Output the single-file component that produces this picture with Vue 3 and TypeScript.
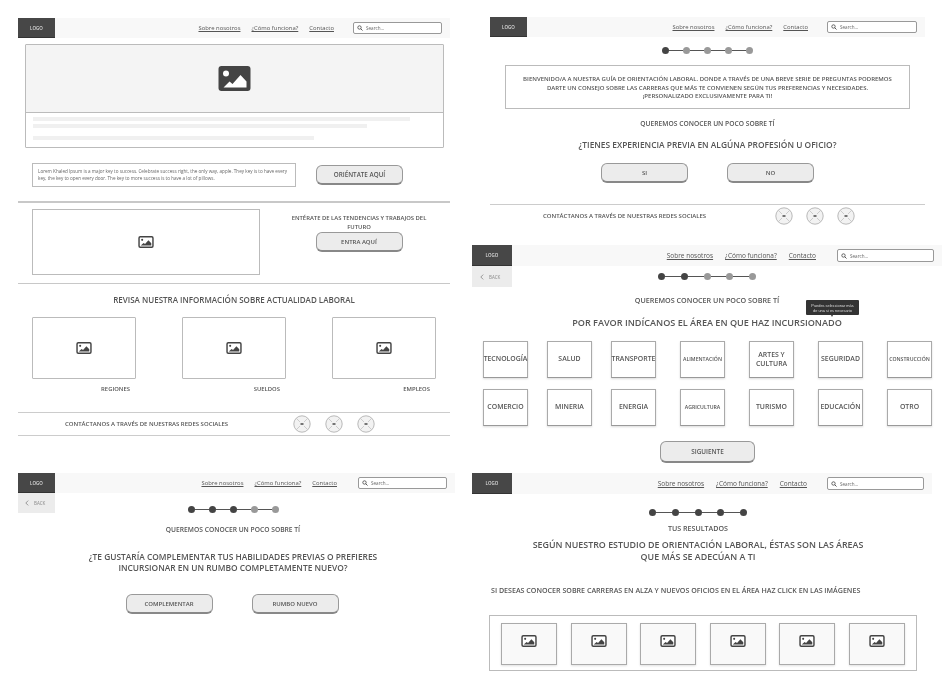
<script setup lang="ts">
type PanelId = 'home' | 'intro' | 'areas' | 'rumbo' | 'results'

const panels: { id: PanelId; back: boolean; steps: number }[] = [
  { id: 'home', back: false, steps: 0 },
  { id: 'intro', back: false, steps: 1 },
  { id: 'areas', back: true, steps: 2 },
  { id: 'rumbo', back: true, steps: 3 },
  { id: 'results', back: false, steps: 5 },
]

const stepIndexes = [1, 2, 3, 4, 5]
const socials = [1, 2, 3]
const infoCards = ['REGIONES', 'SUELDOS', 'EMPLEOS']
const resultCards = [1, 2, 3, 4, 5, 6]

const areaRows = [
  [
    { name: 'TECNOLOGÍA' },
    { name: 'SALUD' },
    { name: 'TRANSPORTE' },
    { name: 'ALIMENTACIÓN', small: true },
    { name: 'ARTES Y CULTURA' },
    { name: 'SEGURIDAD' },
    { name: 'CONSTRUCCIÓN', small: true },
  ],
  [
    { name: 'COMERCIO' },
    { name: 'MINERIA' },
    { name: 'ENERGIA' },
    { name: 'AGRICULTURA', small: true },
    { name: 'TURISMO' },
    { name: 'EDUCACIÓN' },
    { name: 'OTRO' },
  ],
]
</script>

<template>
  <main class="board">
    <svg class="defs" width="0" height="0" aria-hidden="true">
      <symbol id="pic-solid" viewBox="0 0 32 25">
        <rect width="32" height="25" rx="3" fill="#444" />
        <circle cx="7.5" cy="7.5" r="3" fill="#fff" />
        <path d="M5 21.5l6-6 3 2.5 8-9 6 6.5v6z" fill="#fff" />
      </symbol>
      <symbol id="pic-line" viewBox="0 0 32 25">
        <rect x="1.5" y="1.5" width="29" height="22" rx="2.5" fill="#fff" stroke="#444" stroke-width="3" />
        <circle cx="8" cy="8" r="2.2" fill="#444" />
        <path d="M5 20l6-5.5 3 2 7-7.5 6 6v5z" fill="#444" />
      </symbol>
    </svg>

    <section v-for="panel in panels" :key="panel.id" class="panel" :class="panel.id">
      <header class="nav">
        <div class="logo">LOGO</div>
        <nav class="links">
          <a>Sobre nosotros</a>
          <a>¿Cómo funciona?</a>
          <a>Contacto</a>
        </nav>
        <div class="search">
          <svg class="search-icon" viewBox="0 0 12 12">
            <circle cx="5" cy="5" r="3.4" fill="none" stroke="#444" stroke-width="1.6" />
            <path d="M7.6 7.6L11 11" stroke="#444" stroke-width="1.8" />
          </svg>
          <span>Search...</span>
        </div>
      </header>

      <div v-if="panel.back" class="back">
        <svg viewBox="0 0 6 10" class="back-arrow">
          <path d="M5 1L1 5l4 4" fill="none" stroke="#777" stroke-width="1.2" />
        </svg>
        <span>BACK</span>
      </div>

      <div v-if="panel.steps" class="stepper">
        <template v-for="n in stepIndexes" :key="n">
          <span v-if="n > 1" class="step-line"></span>
          <span class="step-dot" :class="{ done: n <= panel.steps }"></span>
        </template>
      </div>

      <template v-if="panel.id === 'home'">
        <div class="hero">
          <div class="hero-img">
            <svg class="icon-hero"><use href="#pic-solid" /></svg>
          </div>
          <div class="hero-lines">
            <i class="l1"></i>
            <i class="l2"></i>
            <i class="l3"></i>
          </div>
        </div>
        <div class="lorem-row">
          <p class="lorem">
            Lorem Khaled Ipsum is a major key to success. Celebrate success right, the only way, apple. They key is to have every<br />
            key, the key to open every door. The key to more success is to have a lot of pillows.
          </p>
          <button class="btn strong">ORIÉNTATE AQUÍ</button>
        </div>
        <hr class="rule thick" />
        <div class="trend-row">
          <div class="trend-img">
            <svg class="icon-small"><use href="#pic-line" /></svg>
          </div>
          <div class="trend-side">
            <h3>ENTÉRATE DE LAS TENDENCIAS Y TRABAJOS DEL<br />FUTURO</h3>
            <button class="btn entra">ENTRA AQUÍ</button>
          </div>
        </div>
        <hr class="rule" />
        <h2 class="info-title">REVISA NUESTRA INFORMACIÓN SOBRE ACTUALIDAD LABORAL</h2>
        <div class="info-grid">
          <div v-for="card in infoCards" :key="card" class="info-card">
            <div class="info-img">
              <svg class="icon-small"><use href="#pic-line" /></svg>
            </div>
            <span class="info-label">{{ card }}</span>
          </div>
        </div>
      </template>

      <template v-if="panel.id === 'intro'">
        <div class="welcome">
          BIENVENIDO/A A NUESTRA GUÍA DE ORIENTACIÓN LABORAL. DONDE A TRAVÉS DE UNA BREVE SERIE DE PREGUNTAS PODREMOS<br />
          DARTE UN CONSEJO SOBRE LAS CARRERAS QUE MÁS TE CONVIENEN SEGÚN TUS PREFERENCIAS Y NECESIDADES.<br />
          ¡PERSONALIZADO EXCLUSIVAMENTE PARA TI!
        </div>
        <p class="kicker">QUEREMOS CONOCER UN POCO SOBRE TÍ</p>
        <h2 class="question">¿TIENES EXPERIENCIA PREVIA EN ALGÚNA PROFESIÓN U OFICIO?</h2>
        <div class="choices">
          <button class="btn">SI</button>
          <button class="btn">NO</button>
        </div>
      </template>

      <template v-if="panel.id === 'areas'">
        <p class="kicker">QUEREMOS CONOCER UN POCO SOBRE TÍ</p>
        <h2 class="question">
          POR FAVOR INDÍCANOS EL ÁREA EN QUE HAZ INCURSIONADO
          <span class="tooltip">Puedes seleccionar más<br />de una si es necesario</span>
        </h2>
        <div v-for="(row, r) in areaRows" :key="r" class="tile-row">
          <div v-for="area in row" :key="area.name" class="tile" :class="{ small: area.small }">
            {{ area.name }}
          </div>
        </div>
        <button class="btn next">SIGUIENTE</button>
      </template>

      <template v-if="panel.id === 'rumbo'">
        <p class="kicker">QUEREMOS CONOCER UN POCO SOBRE TÍ</p>
        <h2 class="question">
          ¿TE GUSTARÍA COMPLEMENTAR TUS HABILIDADES PREVIAS O PREFIERES<br />
          INCURSIONAR EN UN RUMBO COMPLETAMENTE NUEVO?
        </h2>
        <div class="choices">
          <button class="btn">COMPLEMENTAR</button>
          <button class="btn">RUMBO NUEVO</button>
        </div>
      </template>

      <template v-if="panel.id === 'results'">
        <p class="kicker">TUS RESULTADOS</p>
        <h2 class="question">
          SEGÚN NUESTRO ESTUDIO DE ORIENTACIÓN LABORAL, ÉSTAS SON LAS ÁREAS<br />
          QUE MÁS SE ADECÚAN A TI
        </h2>
        <p class="hint">SI DESEAS CONOCER SOBRE CARRERAS EN ALZA Y NUEVOS OFICIOS EN EL ÁREA HAZ CLICK EN LAS IMÁGENES</p>
        <div class="result-box">
          <div v-for="n in resultCards" :key="n" class="result-card">
            <svg class="icon-small"><use href="#pic-line" /></svg>
          </div>
        </div>
      </template>

      <footer v-if="panel.id === 'home' || panel.id === 'intro'" class="contact">
        <span class="contact-text">CONTÁCTANOS A TRAVÉS DE NUESTRAS REDES SOCIALES</span>
        <div class="social-list">
          <svg v-for="s in socials" :key="s" class="social" viewBox="0 0 18 18">
            <circle cx="9" cy="9" r="8.2" fill="#f2f2f2" stroke="#aaa" stroke-width="0.8" />
            <path d="M3.5 3.5l3.5 3.5M14.5 3.5L11 7M3.5 14.5L7 11M14.5 14.5L11 11" stroke="#bbb" stroke-width="0.7" />
            <rect x="7.5" y="8.1" width="3" height="1.8" fill="#666" />
          </svg>
        </div>
      </footer>
    </section>
  </main>
</template>

<style scoped>
.board {
  width: 950px;
  height: 685px;
  box-sizing: border-box;
  padding-top: 17px;
  display: grid;
  grid-template-columns: 472px 478px;
  grid-template-rows: 228px 228px 212px;
  overflow: hidden;
  background: #fff;
  font-family: "Open Sans", "Liberation Sans", sans-serif;
  color: #555;
  filter: blur(0.35px);
}

.defs {
  position: absolute;
}

.panel {
  min-width: 0;
}

.home {
  grid-column: 1;
  grid-row: 1 / span 2;
  margin: 1px 0 0 18px;
  width: 432px;
}

.intro {
  grid-column: 2;
  grid-row: 1;
  margin-left: 18px;
  width: 435px;
}

.areas {
  grid-column: 2;
  grid-row: 2;
  width: 470px;
}

.rumbo {
  grid-column: 1;
  grid-row: 3;
  margin-left: 18px;
  width: 437px;
}

.results {
  grid-column: 2;
  grid-row: 3;
  width: 460px;
}

/* nav */
.nav {
  display: flex;
  align-items: center;
  height: 20px;
  background: #f8f8f8;
}

.areas .nav,
.results .nav {
  height: 21px;
}

.logo {
  width: 37px;
  height: 100%;
  display: flex;
  align-items: center;
  justify-content: center;
  background: #474747;
  border-bottom: 1px solid #333;
  box-sizing: border-box;
  color: #ddd;
  font-size: 4.5px;
  font-weight: 600;
}

.areas .logo,
.results .logo {
  width: 40px;
}

.links {
  margin-left: auto;
  display: flex;
  gap: 11px;
  font-size: 5.9px;
  color: #555;
}

.areas .links,
.results .links {
  font-size: 6.5px;
  gap: 12px;
}

.links a {
  text-decoration: underline;
}

.search {
  margin: 0 8px 0 19px;
  width: 89px;
  height: 12px;
  box-sizing: border-box;
  display: flex;
  align-items: center;
  gap: 3px;
  padding-left: 3px;
  background: #fff;
  border: 1px solid #999;
  border-radius: 2px;
  font-size: 4.6px;
  color: #666;
}

.intro .search {
  width: 90px;
}

.rumbo .search {
  margin-left: 21px;
}

.areas .search,
.results .search {
  width: 97px;
  height: 13px;
  margin-left: 21px;
}

.results .search {
  margin-left: 20px;
}

.search-icon {
  width: 6px;
  height: 6px;
}

.back {
  width: 40px;
  height: 21px;
  box-sizing: border-box;
  display: flex;
  align-items: center;
  gap: 5px;
  padding-left: 8px;
  background: #ececec;
  font-size: 4.5px;
  color: #888;
}

.rumbo .back {
  width: 37px;
  height: 20px;
  padding-left: 7px;
}

.back-arrow {
  width: 4px;
  height: 6px;
}

/* stepper */
.stepper {
  display: flex;
  align-items: center;
  justify-content: center;
  height: 7px;
}

.step-dot {
  width: 7px;
  height: 7px;
  flex: none;
  border-radius: 50%;
  background: #999;
}

.step-dot.done {
  background: #444;
}

.step-line {
  width: 14px;
  height: 1px;
  background: #555;
}

.areas .step-line,
.results .step-line {
  width: 15.6px;
}

.intro .stepper {
  margin-top: 10px;
}

.areas .stepper {
  margin-top: -14px;
  height: 7px;
}

.rumbo .stepper {
  margin-top: -7px;
  width: 430px;
}

.results .stepper {
  margin-top: 15px;
  width: 452px;
}

/* home */
.hero {
  margin: 6px 0 0 7px;
  width: 419px;
  height: 104px;
  box-sizing: border-box;
  border: 1px solid #bbb;
  border-radius: 1px;
}

.hero-img {
  height: 67px;
  display: flex;
  align-items: center;
  justify-content: center;
  background: #f4f4f4;
  border-bottom: 1px solid #bbb;
}

.icon-hero {
  width: 33px;
  height: 25px;
}

.hero-lines {
  padding: 4px 0 0 7px;
}

.hero-lines i {
  display: block;
  height: 4px;
  background: #f0f0f0;
}

.hero-lines .l1 {
  width: 377px;
}

.hero-lines .l2 {
  width: 334px;
  margin-top: 3px;
}

.hero-lines .l3 {
  width: 281px;
  margin-top: 8px;
}

.lorem-row {
  display: flex;
  align-items: center;
  gap: 20px;
  margin: 15px 0 0 14px;
}

.lorem {
  margin: 0;
  width: 264px;
  height: 24px;
  box-sizing: border-box;
  padding: 4px 0 0 5px;
  border: 1px solid #bbb;
  font-size: 4.6px;
  line-height: 7px;
  color: #666;
  white-space: nowrap;
}

.rule {
  margin: 0;
  border: 0;
  height: 1px;
  background: #c8c8c8;
}

.rule.thick {
  height: 2px;
  margin-top: 14px;
}

.trend-row {
  display: flex;
  margin: 6px 0 8px 14px;
}

.trend-img {
  width: 228px;
  height: 66px;
  box-sizing: border-box;
  display: flex;
  align-items: center;
  justify-content: center;
  border: 1px solid #bbb;
}

.trend-side {
  margin-left: 24px;
  width: 150px;
  display: flex;
  flex-direction: column;
  align-items: center;
}

.trend-side h3 {
  margin: 5px 0 0;
  font-size: 5.9px;
  line-height: 9px;
  font-weight: 600;
  text-align: center;
}

.icon-small {
  width: 16px;
  height: 12px;
}

.info-title {
  margin: 10px 0 12px;
  font-size: 8px;
  line-height: 11px;
  font-weight: 600;
  text-align: center;
}

.info-grid {
  display: flex;
  gap: 46px;
  margin-left: 14px;
}

.info-card {
  width: 104px;
  display: flex;
  flex-direction: column;
}

.info-img {
  height: 62px;
  box-sizing: border-box;
  display: flex;
  align-items: center;
  justify-content: center;
  border: 1px solid #bbb;
  border-radius: 1px;
}

.info-label {
  margin-top: 6px;
  padding-right: 6px;
  text-align: right;
  font-size: 5.9px;
  line-height: 8px;
  font-weight: 600;
}

/* buttons */
.btn {
  display: block;
  flex: none;
  width: 87px;
  height: 20px;
  padding: 0;
  background: #ececec;
  border: 1px solid #999;
  border-bottom: 2px solid #888;
  border-radius: 6px;
  font-family: inherit;
  font-size: 6px;
  font-weight: 600;
  color: #555;
}

.btn.strong {
  font-size: 6.3px;
}

.next {
  width: 95px;
  height: 22px;
  margin: 15px 0 0 188px;
  font-size: 6.4px;
}

/* questions */
.welcome {
  margin: 11px 0 0 15px;
  width: 405px;
  height: 44px;
  box-sizing: border-box;
  padding-top: 9px;
  border: 1px solid #bbb;
  font-size: 6px;
  line-height: 8.6px;
  font-weight: 600;
  text-align: center;
  white-space: nowrap;
}

.kicker {
  margin: 0;
  text-align: center;
  font-size: 6.7px;
  line-height: 9px;
  font-weight: 600;
}

.intro .kicker {
  margin-top: 10px;
}

.areas .kicker {
  margin-top: 16px;
  font-size: 7.2px;
}

.rumbo .kicker {
  margin-top: 12px;
  width: 430px;
}

.results .kicker {
  margin-top: 8px;
  width: 452px;
  font-size: 7.1px;
}

.question {
  position: relative;
  margin: 0;
  text-align: center;
  font-weight: 600;
  font-size: 8.4px;
  line-height: 11px;
}

.intro .question {
  margin-top: 11px;
}

.areas .question {
  margin-top: 12px;
  font-size: 9.1px;
}

.rumbo .question {
  margin-top: 17px;
  width: 430px;
}

.results .question {
  margin-top: 6px;
  width: 452px;
  font-size: 8.9px;
  line-height: 12px;
}

.tooltip {
  position: absolute;
  left: 334px;
  top: -17px;
  width: 53px;
  height: 15px;
  display: flex;
  align-items: center;
  justify-content: center;
  background: #333;
  border-radius: 1px;
  color: #ddd;
  font-family: "Liberation Sans", sans-serif;
  font-weight: 400;
  font-size: 3.9px;
  line-height: 5px;
}

.tooltip::after {
  content: "";
  position: absolute;
  left: 25px;
  bottom: -2px;
  border: 1px solid transparent;
  border-bottom: 0;
  border-top: 2px solid #333;
}

.choices {
  display: flex;
  gap: 39px;
  justify-content: center;
}

.intro .choices {
  margin-top: 13px;
}

.rumbo .choices {
  margin-top: 21px;
  width: 428px;
}

/* area tiles */
.tile-row {
  display: flex;
  gap: 19px;
  margin: 13px 0 0 11px;
}

.tile-row + .tile-row {
  margin-top: 11px;
}

.tile {
  width: 45px;
  height: 37px;
  box-sizing: border-box;
  display: flex;
  align-items: center;
  justify-content: center;
  border: 1px solid #aaa;
  border-bottom-color: #999;
  box-shadow: 0 1px 2px rgba(0, 0, 0, 0.15);
  text-align: center;
  font-size: 6.9px;
  line-height: 8.5px;
  font-weight: 600;
  white-space: normal;
}

.tile:nth-child(n + 4) {
  margin-left: 5px;
}

.tile.small {
  font-size: 5.2px;
}

/* results */
.hint {
  margin: 23px 0 0 19px;
  font-size: 7.1px;
  line-height: 9px;
  font-weight: 600;
  white-space: nowrap;
}

.result-box {
  margin: 20px 0 0 17px;
  width: 428px;
  height: 56px;
  box-sizing: border-box;
  display: flex;
  justify-content: space-between;
  padding: 7px 11px;
  border: 1px solid #bbb;
}

.result-card {
  width: 56px;
  height: 42px;
  box-sizing: border-box;
  display: flex;
  justify-content: center;
  padding-top: 11px;
  background: #f9f9f9;
  border: 1px solid #aaa;
  box-shadow: 0 1px 2px rgba(0, 0, 0, 0.12);
}

/* footer */
.contact {
  display: flex;
  align-items: center;
  height: 24px;
  box-sizing: border-box;
  border-top: 1px solid #ccc;
  border-bottom: 1px solid #ccc;
  padding-left: 47px;
  font-size: 6px;
  font-weight: 600;
}

.home .contact {
  margin-top: 19px;
}

.intro .contact {
  margin-top: 21px;
  height: 22px;
  padding-left: 53px;
  border-bottom: 0;
}

.contact-text {
  width: 228px;
  white-space: nowrap;
}

.social-list {
  display: flex;
  gap: 14px;
}

.intro .social-list {
  gap: 13px;
}

.social {
  width: 18px;
  height: 18px;
}

.intro .contact-text {
  width: 232px;
}
</style>
